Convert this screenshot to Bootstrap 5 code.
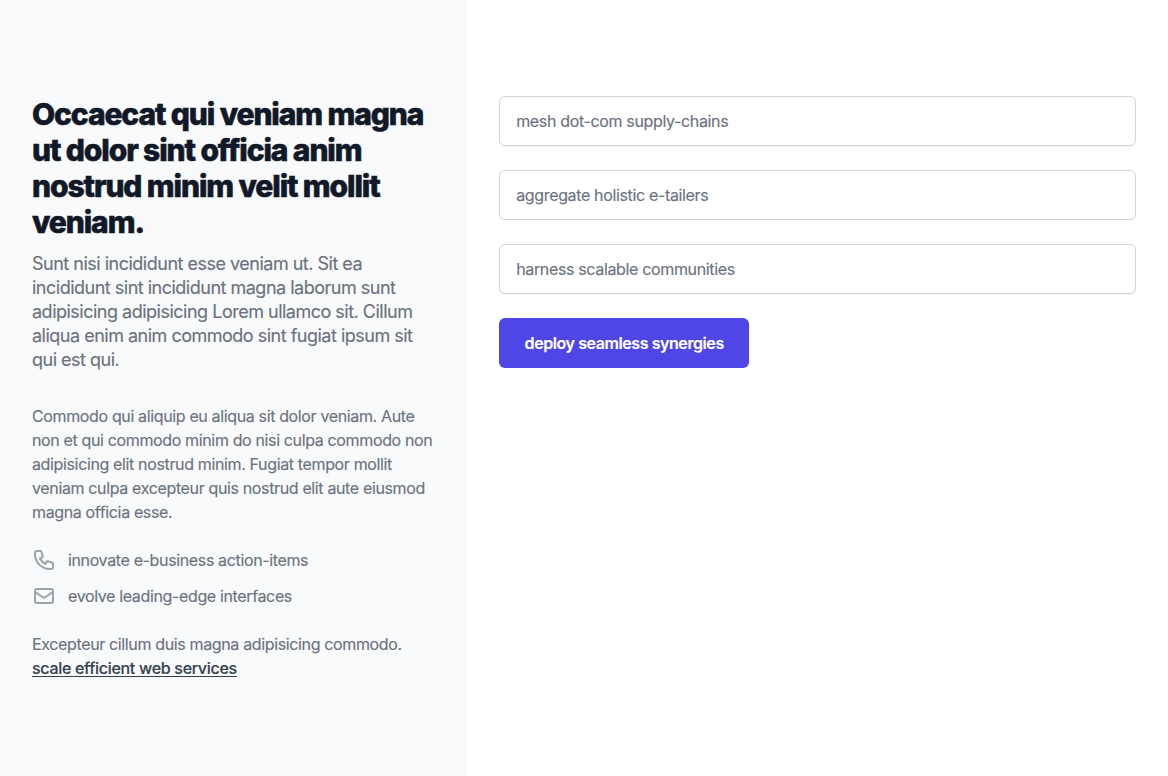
<!DOCTYPE html>
<html lang="en">
<head>
<meta charset="utf-8">
<meta name="viewport" content="width=device-width, initial-scale=1">
<title>Contact</title>
<link href="https://cdn.jsdelivr.net/npm/bootstrap@5.3.0/dist/css/bootstrap.min.css" rel="stylesheet">
<style>
body{font-family:Inter,"Liberation Sans",sans-serif;color:#6b7280;letter-spacing:-.36px;-webkit-text-stroke:.15px}
.info-pane{width:40%;background:#f9fafb;padding:96px 32px}
.form-pane{padding:96px 32px}
h2{font-size:30px;line-height:36px;font-weight:800;letter-spacing:-1.1px;color:#111827;-webkit-text-stroke:.6px}
.intro{font-size:18px;line-height:24px;letter-spacing:-.5px;margin-top:12px}
.details{margin-top:32px}
.contact-line{color:#9ca3af}
.contact-line span{color:#6b7280}
.form-control,.form-control::placeholder{color:#6b7280;opacity:1}
.form-control{height:50px;padding:12px 16px;border-color:#d1d5db;box-shadow:0 1px 2px rgba(0,0,0,.05);letter-spacing:-.35px}
.btn-send{background:#4f46e5;color:#fff;height:50px;width:250px;font-weight:600;letter-spacing:-.42px}
.btn-send:hover{background:#4338ca;color:#fff}
.more{color:#374151;font-weight:500;letter-spacing:-.3px;text-underline-offset:2px;text-decoration-thickness:1px}
</style>
</head>
<body>
<main class="d-flex min-vh-100">
<section class="info-pane flex-shrink-0">
<h2 class="mb-0">Occaecat qui veniam magna ut dolor sint officia anim nostrud minim velit mollit veniam.</h2>
<p class="intro mb-0">Sunt nisi incididunt esse veniam ut. Sit ea incididunt sint incididunt magna laborum sunt adipisicing adipisicing Lorem ullamco sit. Cillum aliqua enim anim commodo sint fugiat ipsum sit qui est qui.</p>
<p class="details mb-4">Commodo qui aliquip eu aliqua sit dolor veniam. Aute non et qui commodo minim do nisi culpa commodo non adipisicing elit nostrud minim. Fugiat tempor mollit veniam culpa excepteur quis nostrud elit aute eiusmod magna officia esse.</p>
<div class="contact-line d-flex align-items-center mb-2 pb-1">
<svg class="flex-shrink-0 me-2" width="24" height="24" viewBox="0 0 24 24" fill="none" stroke="currentColor" stroke-width="2" stroke-linecap="round" stroke-linejoin="round" aria-hidden="true"><path d="M3 5a2 2 0 012-2h3.28a1 1 0 01.948.684l1.498 4.493a1 1 0 01-.502 1.21l-2.257 1.13a11.042 11.042 0 005.516 5.516l1.13-2.257a1 1 0 011.21-.502l4.493 1.498a1 1 0 01.684.949V19a2 2 0 01-2 2h-1C9.716 21 3 14.284 3 6V5z"/></svg>
<span class="ps-1">innovate e-business action-items</span>
</div>
<div class="contact-line d-flex align-items-center mb-4">
<svg class="flex-shrink-0 me-2" width="24" height="24" viewBox="0 0 24 24" fill="none" stroke="currentColor" stroke-width="2" stroke-linecap="round" stroke-linejoin="round" aria-hidden="true"><path d="M3 8l7.89 5.26a2 2 0 002.22 0L21 8M5 19h14a2 2 0 002-2V7a2 2 0 00-2-2H5a2 2 0 00-2 2v10a2 2 0 002 2z"/></svg>
<span class="ps-1">evolve leading-edge interfaces</span>
</div>
<p class="mb-0">Excepteur cillum duis magna adipisicing commodo. <a class="more d-block" href="#">scale efficient web services</a></p>
</section>
<form class="form-pane flex-grow-1 d-grid gap-4 align-content-start">
<input class="form-control" placeholder="mesh dot-com supply-chains">
<input class="form-control" placeholder="aggregate holistic e-tailers">
<input class="form-control" placeholder="harness scalable communities">
<button class="btn btn-send" type="button">deploy seamless synergies</button>
</form>
</main>
<script src="https://cdn.jsdelivr.net/npm/bootstrap@5.3.0/dist/js/bootstrap.bundle.min.js"></script>
</body>
</html>
